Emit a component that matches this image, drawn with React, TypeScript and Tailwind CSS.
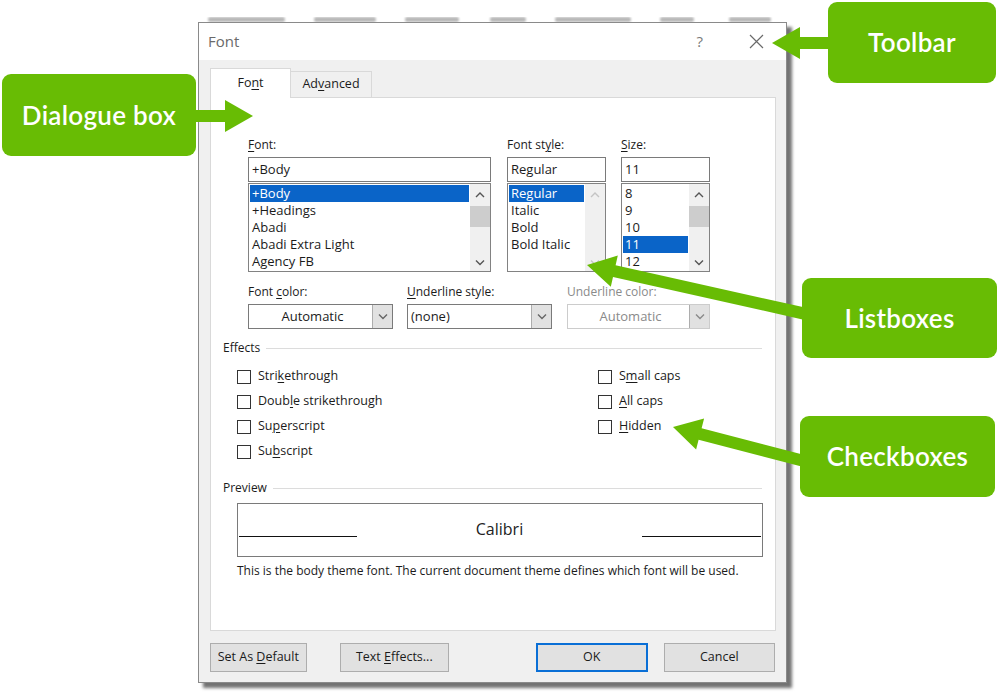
import React from "react";

function arrowPts(x1: number, y1: number, x2: number, y2: number, s = 12, hl = 28, hw = 32) {
  const dx = x2 - x1, dy = y2 - y1;
  const L = Math.hypot(dx, dy);
  const ux = dx / L, uy = dy / L;
  const nx = -uy, ny = ux;
  const bx = x2 - ux * hl, by = y2 - uy * hl;
  const p = (x: number, y: number) => `${x.toFixed(1)},${y.toFixed(1)}`;
  return [
    p(x1 + (nx * s) / 2, y1 + (ny * s) / 2),
    p(bx + (nx * s) / 2, by + (ny * s) / 2),
    p(bx + (nx * hw) / 2, by + (ny * hw) / 2),
    p(x2, y2),
    p(bx - (nx * hw) / 2, by - (ny * hw) / 2),
    p(bx - (nx * s) / 2, by - (ny * s) / 2),
    p(x1 - (nx * s) / 2, y1 - (ny * s) / 2),
  ].join(" ");
}

function U({ children }: { children: React.ReactNode }) {
  return <span className="underline decoration-1 underline-offset-[2px]">{children}</span>;
}

function ChevUp({ c }: { c: string }) {
  return (
    <svg width="10" height="7" viewBox="0 0 10 7">
      <polyline points="1,6 5,2 9,6" fill="none" stroke={c} strokeWidth="1.4" />
    </svg>
  );
}
function ChevDown({ c }: { c: string }) {
  return (
    <svg width="10" height="7" viewBox="0 0 10 7">
      <polyline points="1,1.5 5,5.5 9,1.5" fill="none" stroke={c} strokeWidth="1.4" />
    </svg>
  );
}

function ListBox({
  items,
  sel,
  disabled,
}: {
  items: string[];
  sel: number;
  disabled?: boolean;
}) {
  return (
    <div className="mt-[1px] flex h-[89px] border border-[#828282] bg-white">
      <div className="flex flex-1 flex-col pl-[1px] pt-[1px]">
        {items.map((t, i) => (
          <div
            key={t}
            className={
              "h-[17px] pl-[2px] text-[13px] leading-[17px] " +
              (i === sel ? "bg-[#0a64c8] text-white" : "text-[#1b1b1b]")
            }
          >
            {t}
          </div>
        ))}
      </div>
      <div className="ml-[1px] flex w-[20px] flex-col bg-[#f0f0f0]">
        <div className="flex h-[20px] items-center justify-center">
          <ChevUp c={disabled ? "#c4c4c4" : "#555"} />
        </div>
        <div className="flex-1 pt-[2px]">
          {!disabled && <div className="h-[21px] bg-[#cdcdcd]" />}
        </div>
        <div className="flex h-[18px] items-center justify-center">
          <ChevDown c={disabled ? "#c4c4c4" : "#555"} />
        </div>
      </div>
    </div>
  );
}

function Combo({
  text,
  center,
  disabled,
  w,
}: {
  text: string;
  center?: boolean;
  disabled?: boolean;
  w: string;
}) {
  return (
    <div
      className={
        "flex h-[25px] border bg-white " +
        w +
        (disabled ? " border-[#cccccc]" : " border-[#7a7a7a]")
      }
    >
      <div
        className={
          "flex flex-1 items-center text-[13px] " +
          (center ? "justify-center pl-[4px]" : "pl-[3px]") +
          (disabled ? " text-[#8a8a8a]" : " text-[#1b1b1b]")
        }
      >
        {text}
      </div>
      <div className="flex w-[20px] items-center justify-center border-l border-[#adadad] bg-[#e1e1e1]">
        <ChevDown c={disabled ? "#8a8a8a" : "#666"} />
      </div>
    </div>
  );
}

function Check({ children }: { children: React.ReactNode }) {
  return (
    <div className="flex h-[25px] items-center">
      <div className="h-[14px] w-[14px] border border-[#333] bg-white" />
      <div className="ml-[7px] text-[12.5px] text-[#1b1b1b]">{children}</div>
    </div>
  );
}

function Btn({
  children,
  w,
  ok,
}: {
  children: React.ReactNode;
  w: string;
  ok?: boolean;
}) {
  return (
    <div
      className={
        "flex h-[29px] items-center justify-center bg-[#e1e1e1] text-[12.5px] text-[#1b1b1b] " +
        w +
        (ok ? " border-2 border-[#0a6fd6]" : " border border-[#adadad]")
      }
    >
      <span>{children}</span>
    </div>
  );
}

function GreenBox({ text, cls }: { text: string; cls: string }) {
  return (
    <div
      className={
        "absolute flex items-center justify-center rounded-[9px] bg-[#68bc04] font-['Lato',sans-serif] text-[26px] font-semibold tracking-[0.3px] text-white " +
        cls
      }
    >
      {text}
    </div>
  );
}

const smudges: [number, number][] = [
  [208, 77],
  [314, 62],
  [405, 54],
  [490, 36],
  [555, 76],
  [660, 34],
  [729, 42],
];

export default function App() {
  return (
    <div className="relative h-[698px] w-[1000px] overflow-hidden bg-white font-['Open_Sans',sans-serif] text-[#1b1b1b]">
      {/* background application menu peeking above dialog (illegible) */}
      <div className="absolute left-0 top-[17px] flex h-[5px] w-[1000px] overflow-hidden">
        {smudges.map(([x, w], i) => (
          <div
            key={i}
            className="absolute top-0 h-[5px] rounded-[2px] bg-[#8a8a8a] opacity-60 blur-[1px]"
            style={{ left: x, width: w }}
          />
        ))}
      </div>

      {/* dialog window */}
      <div className="pl-[198px] pt-[22px]">
        <div className="relative flex h-[661px] w-[589px] flex-col border border-[#8a8a8a] bg-[#f0f0f0] shadow-[5px_5px_3px_rgba(0,0,0,0.55)]">
          {/* title bar */}
          <div className="flex h-[37px] items-center justify-between bg-white pl-[9px] pr-[22px]">
            <span className="text-[15px] text-[#6a6a6a]">Font</span>
            <div className="flex items-center gap-[46px] text-[#7a7a7a]">
              <span className="text-[15px]">?</span>
              <svg width="15" height="15" viewBox="0 0 15 15">
                <path d="M1 1 L14 14 M14 1 L1 14" stroke="#6a6a6a" strokeWidth="1.2" />
              </svg>
            </div>
          </div>

          {/* body */}
          <div className="flex flex-1 flex-col px-[11px] pt-[8px]">
            {/* tabs */}
            <div className="flex h-[29px] items-end">
              <div className="relative z-10 -mb-px flex h-[30px] w-[81px] items-center justify-center border border-b-0 border-[#d9d9d9] bg-white text-[12.5px]">
                <span>
                  Fo<U>n</U>t
                </span>
              </div>
              <div className="flex h-[26px] w-[81px] items-center justify-center border border-b-0 border-l-0 border-[#d9d9d9] bg-[#f0f0f0] text-[12.5px]">
                <span>
                  Ad<U>v</U>anced
                </span>
              </div>
            </div>

            {/* panel */}
            <div className="flex h-[534px] w-[566px] flex-col border border-[#d9d9d9] bg-white">
              {/* font lists */}
              <div className="flex pl-[37px] pt-[39px]">
                <div className="w-[243px]">
                  <div className="mb-[4px] h-[16px] text-[12px] leading-[16px]">
                    <U>F</U>ont:
                  </div>
                  <div className="flex h-[25px] items-center border border-[#7a7a7a] pl-[3px] text-[13px]">
                    +Body
                  </div>
                  <ListBox
                    items={["+Body", "+Headings", "Abadi", "Abadi Extra Light", "Agency FB"]}
                    sel={0}
                  />
                </div>
                <div className="ml-[16px] w-[99px]">
                  <div className="mb-[4px] h-[16px] text-[12px] leading-[16px]">
                    Font st<U>y</U>le:
                  </div>
                  <div className="flex h-[25px] items-center border border-[#7a7a7a] pl-[3px] text-[13px]">
                    Regular
                  </div>
                  <ListBox items={["Regular", "Italic", "Bold", "Bold Italic"]} sel={0} disabled />
                </div>
                <div className="ml-[15px] w-[89px]">
                  <div className="mb-[4px] h-[16px] text-[12px] leading-[16px]">
                    <U>S</U>ize:
                  </div>
                  <div className="flex h-[25px] items-center border border-[#7a7a7a] pl-[3px] text-[13px]">
                    11
                  </div>
                  <ListBox items={["8", "9", "10", "11", "12"]} sel={3} />
                </div>
              </div>

              {/* combos */}
              <div className="mt-[12px] flex pl-[37px]">
                <div className="w-[145px]">
                  <div className="mb-[4px] h-[16px] text-[12px] leading-[16px]">
                    Font <U>c</U>olor:
                  </div>
                  <Combo text="Automatic" center w="w-[145px]" />
                </div>
                <div className="ml-[14px] w-[145px]">
                  <div className="mb-[4px] h-[16px] text-[12px] leading-[16px]">
                    <U>U</U>nderline style:
                  </div>
                  <Combo text="(none)" w="w-[145px]" />
                </div>
                <div className="ml-[15px] w-[143px]">
                  <div className="mb-[4px] h-[16px] text-[12px] leading-[16px] text-[#8a8a8a]">
                    Underline color:
                  </div>
                  <Combo text="Automatic" center disabled w="w-[143px]" />
                </div>
              </div>

              {/* effects */}
              <div className="mt-[11px] flex items-center pl-[12px] pr-[13px]">
                <span className="h-[16px] text-[12px] leading-[16px]">Effects</span>
                <div className="ml-[6px] h-px flex-1 bg-[#dcdcdc]" />
              </div>
              <div className="mt-[8px] flex pl-[26px]">
                <div className="w-[361px]">
                  <Check>
                    Stri<U>k</U>ethrough
                  </Check>
                  <Check>
                    Doub<U>l</U>e strikethrough
                  </Check>
                  <Check>
                    Su<U>p</U>erscript
                  </Check>
                  <Check>
                    Su<U>b</U>script
                  </Check>
                </div>
                <div>
                  <Check>
                    S<U>m</U>all caps
                  </Check>
                  <Check>
                    <U>A</U>ll caps
                  </Check>
                  <Check>
                    <U>H</U>idden
                  </Check>
                </div>
              </div>

              {/* preview */}
              <div className="mt-[16px] flex items-center pl-[12px] pr-[13px]">
                <span className="h-[16px] text-[12px] leading-[16px]">Preview</span>
                <div className="ml-[6px] h-px flex-1 bg-[#dcdcdc]" />
              </div>
              <div className="ml-[26px] mt-[7px] flex h-[54px] w-[526px] items-end border border-[#7a7a7a] pb-[19px]">
                <div className="ml-[1px] h-[1.5px] w-[118px] bg-[#111]" />
                <div className="flex flex-1 justify-center">
                  <span className="-mb-[2px] text-[16px] leading-[20px] text-[#222]">Calibri</span>
                </div>
                <div className="mr-[1px] h-[1.5px] w-[119px] bg-[#111]" />
              </div>
              <div className="ml-[26px] mt-[6px] text-[12px] leading-[16px]">
                This is the body theme font. The current document theme defines which font will be used.
              </div>
            </div>

            {/* buttons */}
            <div className="mt-[12px] flex">
              <Btn w="w-[97px]">
                Set As <U>D</U>efault
              </Btn>
              <Btn w="w-[110px] ml-[33px]">
                Text <U>E</U>ffects...
              </Btn>
              <Btn w="w-[112px] ml-[87px]" ok>
                OK
              </Btn>
              <Btn w="w-[112px] ml-[16px]">Cancel</Btn>
            </div>
          </div>
        </div>
      </div>

      {/* annotations */}
      <svg className="pointer-events-none absolute left-0 top-0" width="1000" height="698">
        <polygon points={arrowPts(190, 116, 253, 116)} fill="#68bc04" />
        <polygon points={arrowPts(832, 43, 772, 43)} fill="#68bc04" />
        <polygon points={arrowPts(806, 314, 587, 265)} fill="#68bc04" />
        <polygon points={arrowPts(804, 461, 673, 427)} fill="#68bc04" />
      </svg>
      <GreenBox text="Dialogue box" cls="left-[2px] top-[74px] h-[82px] w-[194px]" />
      <GreenBox text="Toolbar" cls="left-[828px] top-[2px] h-[81px] w-[168px]" />
      <GreenBox text="Listboxes" cls="left-[802px] top-[278px] h-[80px] w-[195px]" />
      <GreenBox text="Checkboxes" cls="left-[800px] top-[416px] h-[81px] w-[195px]" />
    </div>
  );
}
